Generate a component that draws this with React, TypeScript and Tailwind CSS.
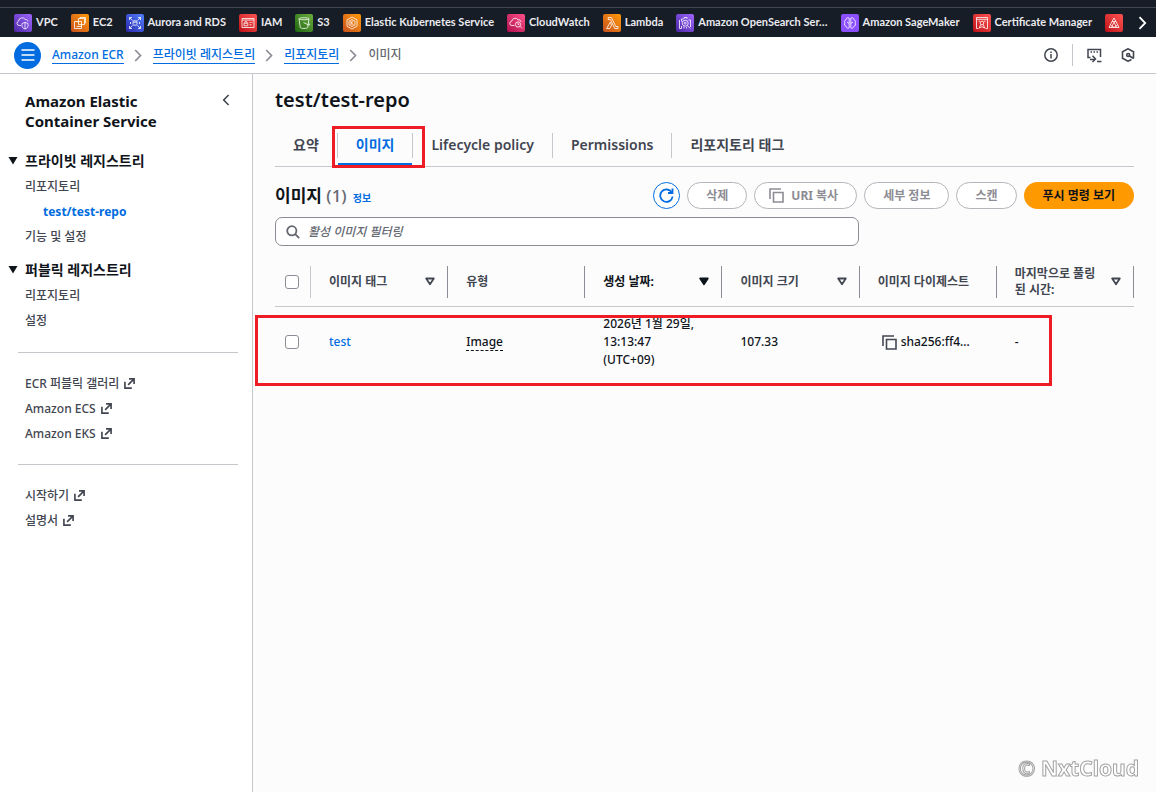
import { useState, type ReactNode } from "react";

const FAVORITES: { label: string; bg: string; icon: ReactNode }[] = [
  {
    label: "VPC",
    bg: "bg-linear-to-tr from-[#4d27a8] to-[#a166ff]",
    icon: (
      <>
        <path d="M7 11.5H5.2A2.2 2.2 0 0 1 4.6 7.2 3.6 3.6 0 0 1 11.3 5.6 2 2 0 0 1 14 7.4" />
        <path d="M11 8.4l3 1.1v2.3c0 1.6-1.2 2.6-3 3.2-1.8-.6-3-1.6-3-3.2V9.5zM11 8.4V15" />
      </>
    ),
  },
  {
    label: "EC2",
    bg: "bg-linear-to-tr from-[#c8511b] to-[#ff9900]",
    icon: (
      <>
        <path d="M7.5 4.5h6v6h-6zM7.5 7.5h-4v7h7v-4M9 4.5V3.5h5.5V9h-1" />
        <path d="M5.5 7.5h5v5h-5" />
      </>
    ),
  },
  {
    label: "Aurora and RDS",
    bg: "bg-linear-to-tr from-[#2e27ad] to-[#527fff]",
    icon: (
      <>
        <path d="M3.5 6V3.5H6M3.5 3.5l3 3M12 3.5h2.5V6M14.5 3.5l-3 3M3.5 12v2.5H6M3.5 14.5l3-3M14.5 12v2.5H12M14.5 14.5l-3-3" />
        <path d="M7 7.5c0-1 4-1 4 0v3c0 1-4 1-4 0zM7 7.5c0 1 4 1 4 0M4.5 8v2M13.5 8v2" />
      </>
    ),
  },
  {
    label: "IAM",
    bg: "bg-linear-to-tr from-[#bd0816] to-[#ff5252]",
    icon: (
      <>
        <path d="M3 4.5h12v9H3zM3 6h12M5 9.2h3.8v2.6H5zM5.9 9.2V8c0-1 2-1 2 0v1.2" />
        <path d="M10.5 8.5h1.2M12.6 8.5h1M10.5 10.8h2" />
      </>
    ),
  },
  {
    label: "S3",
    bg: "bg-linear-to-tr from-[#1b660f] to-[#6cae3e]",
    icon: (
      <>
        <path d="M4 4.8c0-1.4 10-1.4 10 0 0 1.3-10 1.3-10 0l1.3 8.7c.2 1.3 7.2 1.3 7.4 0L14 4.8" />
        <path d="M8.5 8.5l5 2.4c1.5.5 1.6-.8.2-1.6" />
      </>
    ),
  },
  {
    label: "Elastic Kubernetes Service",
    bg: "bg-linear-to-tr from-[#c8511b] to-[#ff9900]",
    icon: (
      <>
        <path d="M9 3l5 2.8v6.4L9 15l-5-2.8V5.8z" />
        <path d="M6 7.2l3-1.7 3 1.7v3.6l-3 1.7-3-1.7zM8 7v4M8 9.2L10.4 7M8.6 8.8l1.8 2.4" />
      </>
    ),
  },
  {
    label: "CloudWatch",
    bg: "bg-linear-to-tr from-[#b0084d] to-[#ff4f8b]",
    icon: (
      <>
        <path d="M7.5 11.5H5A2.1 2.1 0 0 1 4.7 7.3 3.4 3.4 0 0 1 11 5.9 2.2 2.2 0 0 1 14 8" />
        <circle cx="11" cy="10.5" r="2.6" />
        <path d="M13 12.3l2 2M11 9v1.5h1.2" />
      </>
    ),
  },
  {
    label: "Lambda",
    bg: "bg-linear-to-tr from-[#c8511b] to-[#ff9900]",
    icon: <path d="M5.2 3.5h3.2l4.4 9h2.2v2h-3.2L7.4 5.5H5.2zM7.3 8.2L8.6 11l-1.8 3.5H3.6z" />,
  },
  {
    label: "Amazon OpenSearch Ser…",
    bg: "bg-linear-to-tr from-[#4d27a8] to-[#a166ff]",
    icon: (
      <>
        <path d="M3.5 6v8.5M5.5 12v2.5H3.5M8 5V3.5h3V5M12.5 6h2v7M5.5 7.5V5h2" />
        <circle cx="9.2" cy="9.2" r="3" />
        <path d="M11.3 11.5l3 3M8 12.5v2M10.5 13v1.5" />
        <circle cx="9.2" cy="9.2" r="1" />
      </>
    ),
  },
  {
    label: "Amazon SageMaker",
    bg: "bg-[#8c4fff]",
    icon: (
      <>
        <path d="M8.2 4.2C6.5 3 5 4.3 5.2 5.6 3.4 6.3 3 8 4 9c-1 1.2-.5 3 1.2 3.4C5.3 14 7 14.8 8.2 13.8z" />
        <path d="M9.8 4.2C11.5 3 13 4.3 12.8 5.6c1.8.7 2.2 2.4 1.2 3.4 1 1.2.5 3-1.2 3.4-.1 1.6-1.8 2.4-3 1.4z" />
        <path d="M6 8l2 1.5M12 8l-2 1.5" />
      </>
    ),
  },
  {
    label: "Certificate Manager",
    bg: "bg-linear-to-tr from-[#bd0816] to-[#ff5252]",
    icon: (
      <>
        <path d="M5.5 14.5h-2v-11h11v11h-2M3.5 5.3h11" />
        <circle cx="9" cy="9" r="1.8" />
        <path d="M7.8 10.5L6.3 14 9 12.7l2.7 1.3-1.5-3.5M5.5 7.2H7M11 7.2h1.5" />
      </>
    ),
  },
  {
    label: "",
    bg: "bg-linear-to-tr from-[#bd0816] to-[#ff5252]",
    icon: <path d="M9 4l2 3.5H7zM7 7.5L4 13.5h10l-3-6M9 8l-2.5 5.5M9 8l2.5 5.5M5.5 11l3.5 2.5 3.5-2.5" />,
  },
];

const COLUMNS = [
  { label: "이미지 태그", sort: "none" },
  { label: "유형" },
  { label: "생성 날짜:", sort: "desc" },
  { label: "이미지 크기", sort: "none" },
  { label: "이미지 다이제스트" },
  { label: "마지막으로 풀링된 시간:", sort: "none" },
];

const TABS = ["요약", "이미지", "Lifecycle policy", "Permissions", "리포지토리 태그"];

function ChevronRight({ className }: { className: string }) {
  return (
    <svg viewBox="0 0 8 13" className={className} fill="none" stroke="currentColor" strokeWidth="1.7">
      <path d="M1.2 1l5.3 5.5L1.2 12" />
    </svg>
  );
}

function ExternalIcon() {
  return (
    <svg viewBox="0 0 12 12" className="size-[11px] shrink-0" fill="none" stroke="currentColor" strokeWidth="1.8">
      <path d="M1 4v7h7.5M5.5 1H11v5.5M11 1L4.5 7.5" />
    </svg>
  );
}

function CopyIcon() {
  return (
    <svg viewBox="0 0 15 15" className="size-[15px] shrink-0" fill="none" stroke="currentColor" strokeWidth="1.6">
      <path d="M1 11V1h11M4.5 4.5H14V14H4.5z" />
    </svg>
  );
}

function SortIcon({ filled }: { filled: boolean }) {
  return (
    <svg viewBox="0 0 10 9" className="h-[9px] w-[10px] shrink-0" stroke="currentColor" strokeWidth="1.8" strokeLinejoin="round" fill={filled ? "currentColor" : "none"}>
      <path d="M1.2 1.5h7.6L5 7.2z" />
    </svg>
  );
}

function NavSection({ title, children }: { title: string; children: ReactNode }) {
  return (
    <section>
      <button className="flex h-[25px] items-center gap-[7px] pl-2 text-[14px] font-bold text-[#0f141a]">
        <svg viewBox="0 0 10 9" className="h-[9px] w-[10px]" fill="currentColor">
          <path d="M.5 1h9L5 8.5z" />
        </svg>
        {title}
      </button>
      <ul className="pt-px">{children}</ul>
    </section>
  );
}

function NavItem({ label, external, active }: { label: string; external?: boolean; active?: boolean }) {
  return (
    <li className={active ? "h-[25px] pl-[43px]" : "h-[25px] pl-[25px]"}>
      <a
        href="#"
        className={
          active
            ? "inline-flex h-full items-center font-bold text-[#006ce0]"
            : "inline-flex h-full items-center gap-[5px]"
        }
      >
        {label}
        {external && <ExternalIcon />}
      </a>
    </li>
  );
}

function ActionButton({ icon, children }: { icon?: ReactNode; children: ReactNode }) {
  return (
    <button
      disabled
      className={`flex h-[27px] items-center gap-[7px] rounded-full border border-[#b4b4bb] bg-white pr-[18px] font-bold whitespace-nowrap text-[#8c8c94] ${
        icon ? "pl-[14px]" : "pl-[18px]"
      }`}
    >
      {icon}
      {children}
    </button>
  );
}

function ServiceBar() {
  return (
    <nav className="bg-[#161d26] pt-[7px]">
      <div className="flex h-[30px] items-center border-t border-[#424650] pr-[9px] pl-[14px]">
        <div className="flex min-w-0 flex-1 items-center gap-[13px] overflow-hidden">
          {FAVORITES.map((f, i) => (
            <a
              key={i}
              href="#"
              aria-label={f.label || "Service"}
              className="flex shrink-0 items-center gap-1 font-[Lato,sans-serif] text-[11px] font-bold whitespace-nowrap text-[#ebebf0]"
            >
              <span className={`size-[18px] rounded-[2px] ${f.bg}`}>
                <svg viewBox="0 0 18 18" className="size-[18px]" fill="none" stroke="white" strokeWidth="0.8">
                  {f.icon}
                </svg>
              </span>
              {f.label}
            </a>
          ))}
        </div>
        <button aria-label="Next" className="text-white">
          <ChevronRight className="h-[14px] w-[9px]" />
        </button>
      </div>
    </nav>
  );
}

function Breadcrumbs() {
  return (
    <header className="flex h-[37px] items-center justify-between border-b border-[#c6c6cd] bg-white pr-[21px] pl-[14px]">
      <div className="flex items-center gap-[11px]">
        <button aria-label="Menu" className="flex size-[27px] items-center justify-center rounded-full bg-[#006ce0]">
          <svg viewBox="0 0 14 12" className="h-3 w-[14px]" stroke="white" strokeWidth="1.6">
            <path d="M.5 1h13M.5 6h13M.5 11h13" />
          </svg>
        </button>
        {["Amazon ECR", "프라이빗 레지스트리", "리포지토리"].map((c) => (
          <span key={c} className="flex items-center gap-[10px]">
            <a href="#" className="border-b border-[#006ce0] leading-4 text-[#006ce0]">
              {c}
            </a>
            <ChevronRight className="h-[13px] w-2 text-[#8c8c94]" />
          </span>
        ))}
        <span className="leading-4 text-[#656871]">이미지</span>
      </div>
      <div className="flex items-center text-[#424650]">
        <button aria-label="Info">
          <svg viewBox="0 0 14 14" className="size-[14px]" fill="none" stroke="currentColor" strokeWidth="1.5">
            <circle cx="7" cy="7" r="6.2" />
            <path d="M7 6v4.5M7 3.5V5" />
          </svg>
        </button>
        <span className="mr-[14px] ml-[14px] h-[22px] w-px bg-[#c6c6cd]" />
        <button aria-label="CloudShell">
          <svg viewBox="0 0 15 15" className="size-[15px]" fill="none" stroke="currentColor" strokeWidth="1.5">
            <path d="M3.5 9.5H1V1.5h12.5V9M3.5 4h1.5M6.5 4H8M9.5 4H11M3 11.5h5.5M5.5 7.8L8.5 11l-3 3M10 13.5h4.5" />
          </svg>
        </button>
        <button aria-label="Amazon Q" className="ml-[19px]">
          <svg viewBox="0 0 14 14" className="size-[14px]" fill="none" stroke="currentColor" strokeWidth="1.6">
            <path d="M10.5 11.5L7 13.2 1.5 10.2V3.8L7 .8l5.5 3v6.4M7.5 7.5l5.3 3" />
            <circle cx="7.2" cy="7" r="1.5" />
          </svg>
        </button>
      </div>
    </header>
  );
}

function SideNav() {
  return (
    <aside className="w-[253px] shrink-0 border-r border-[#c6c6cd] bg-white pt-[17px] text-[#424650]">
      <div className="flex items-start justify-between pr-[22px] pl-[25px]">
        <h2 className="w-[160px] text-[15px] leading-5 font-bold text-[#0f141a]">Amazon Elastic Container Service</h2>
        <button aria-label="Close navigation" className="mt-[3px]">
          <ChevronRight className="h-3 w-2 rotate-180" />
        </button>
      </div>
      <div className="mt-[17px] flex flex-col gap-2">
        <NavSection title="프라이빗 레지스트리">
          <NavItem label="리포지토리" />
          <NavItem label="test/test-repo" active />
          <NavItem label="기능 및 설정" />
        </NavSection>
        <NavSection title="퍼블릭 레지스트리">
          <NavItem label="리포지토리" />
          <NavItem label="설정" />
        </NavSection>
      </div>
      <hr className="mt-[19px] mr-[14px] ml-[18px] border-[#c6c6cd]" />
      <ul className="my-[18px]">
        <NavItem label="ECR 퍼블릭 갤러리" external />
        <NavItem label="Amazon ECS" external />
        <NavItem label="Amazon EKS" external />
      </ul>
      <hr className="mr-[14px] ml-[18px] border-[#c6c6cd]" />
      <ul className="my-[18px]">
        <NavItem label="시작하기" external />
        <NavItem label="설명서" external />
      </ul>
    </aside>
  );
}

function Tabs() {
  const [tab, setTab] = useState("이미지");
  return (
    <div role="tablist" className="mt-3 flex h-[43px] items-center border-b border-[#c6c6cd]">
      {TABS.map((t, i) => (
        <div key={t} className="relative flex h-full items-center">
          {i > 0 && <span className="h-[25px] w-px bg-[#c6c6cd]" />}
          <button
            role="tab"
            aria-selected={t === tab}
            onClick={() => setTab(t)}
            className={`h-full border-b-[3px] px-[18px] pt-px text-[14px] font-semibold ${
              t === tab ? "border-[#006ce0] text-[#006ce0]" : "border-transparent text-[#424650]"
            }`}
          >
            {t}
          </button>
          {t === "이미지" && (
            <span className="pointer-events-none absolute top-[2px] -right-[13px] -bottom-[2px] -left-[5px] z-10 border-3 border-[#ee1c24]" />
          )}
        </div>
      ))}
    </div>
  );
}

function ImageTable() {
  return (
    <div className="relative mt-3">
      <table className="w-full table-fixed border-collapse text-left text-[#0f141a]">
        <thead>
          <tr className="h-12 border-b border-[#c6c6cd] text-[#424650]">
            <th className="w-9 p-0">
              <div className="flex h-8 items-center border-r border-[#c6c6cd] pl-[10px]">
                <input type="checkbox" aria-label="모두 선택" className="size-[14px] appearance-none rounded-[3px] border border-[#8c8c94] bg-white" />
              </div>
            </th>
            {COLUMNS.map((c) => (
              <th key={c.label} className="p-0 font-bold">
                <div className="flex h-8 items-center justify-between gap-2 border-r border-[#8c8c94] pr-3 pl-[18px] leading-4">
                  <span className={c.sort === "desc" ? "text-[#0f141a]" : ""}>{c.label}</span>
                  {c.sort && (
                    <button aria-label={`${c.label} 정렬`} className={c.sort === "desc" ? "text-[#0f141a]" : ""}>
                      <SortIcon filled={c.sort === "desc"} />
                    </button>
                  )}
                </div>
              </th>
            ))}
          </tr>
        </thead>
        <tbody>
          <tr className="h-[72px] leading-[18px]">
            <td className="p-0 pl-[10px]">
              <input type="checkbox" aria-label="test 선택" className="block size-[14px] appearance-none rounded-[3px] border border-[#8c8c94] bg-white" />
            </td>
            <td className="p-0 pl-[18px]">
              <a href="#" className="text-[#006ce0]">test</a>
            </td>
            <td className="p-0 pl-[18px]">
              <span className="border-b border-dashed border-[#0f141a]">Image</span>
            </td>
            <td className="p-0 pl-[18px]">
              2026년 1월 29일,
              <br />
              13:13:47
              <br />
              (UTC+09)
            </td>
            <td className="p-0 pl-[18px]">107.33</td>
            <td className="p-0 pl-[22px]">
              <span className="flex items-center gap-1">
                <button aria-label="다이제스트 복사" className="text-[#424650]">
                  <CopyIcon />
                </button>
                sha256:ff4…
              </span>
            </td>
            <td className="p-0 pl-[18px]">-</td>
          </tr>
        </tbody>
      </table>
      <span className="pointer-events-none absolute top-[57px] right-[82px] -left-5 h-[71px] border-3 border-[#ee1c24]" />
    </div>
  );
}

export default function App() {
  return (
    <div className="flex min-h-screen flex-col bg-[#fcfcfd] font-['Noto_Sans','Noto_Sans_CJK_KR',sans-serif] text-[12px] font-medium">
      <ServiceBar />
      <Breadcrumbs />
      <div className="flex flex-1">
        <SideNav />
        <main className="min-w-0 flex-1 px-[22px] pt-[14px]">
          <h1 className="text-[20px] leading-6 font-semibold text-[#0f141a]">test/test-repo</h1>
          <Tabs />
          <div className="mt-[15px] flex items-center justify-between">
            <div className="flex items-baseline gap-[6px]">
              <h2 className="text-[17px] leading-6 font-bold text-[#0f141a]">
                이미지 <span className="font-medium text-[#656871]">(1)</span>
              </h2>
              <a href="#" className="text-[10px] font-bold text-[#006ce0]">정보</a>
            </div>
            <div className="flex gap-[7px]">
              <button aria-label="새로 고침" className="flex size-[27px] items-center justify-center rounded-full border border-[#006ce0] bg-white text-[#006ce0]">
                <svg viewBox="0 0 15 15" className="size-[15px]" fill="none" stroke="currentColor" strokeWidth="1.8">
                  <path d="M13.6 8.5A6.2 6.2 0 1 1 12.8 4.5M13.5.5V5H9" />
                </svg>
              </button>
              <ActionButton>삭제</ActionButton>
              <ActionButton icon={<CopyIcon />}>URI 복사</ActionButton>
              <ActionButton>세부 정보</ActionButton>
              <ActionButton>스캔</ActionButton>
              <button className="h-[27px] rounded-full bg-[#ff9900] px-[19px] font-bold whitespace-nowrap text-[#0f141a]">
                푸시 명령 보기
              </button>
            </div>
          </div>
          <label className="mt-2 flex h-[29px] w-[68%] items-center gap-2 rounded-[7px] border border-[#8c8c94] bg-white px-[10px]">
            <svg viewBox="0 0 14 14" className="size-[14px] shrink-0 text-[#656871]" fill="none" stroke="currentColor" strokeWidth="1.8">
              <circle cx="5.8" cy="5.8" r="4.6" />
              <path d="M9.2 9.2l4 4" />
            </svg>
            <input
              type="text"
              aria-label="활성 이미지 필터링"
              placeholder="활성 이미지 필터링"
              className="min-w-0 flex-1 outline-none placeholder:text-[#656871] placeholder:italic"
            />
          </label>
          <ImageTable />
        </main>
      </div>
      <div className="pointer-events-none fixed right-[17px] bottom-[10px] text-[21px] leading-7 font-bold text-white [-webkit-text-stroke:1px_#a3a3a3]">
        © NxtCloud
      </div>
    </div>
  );
}
